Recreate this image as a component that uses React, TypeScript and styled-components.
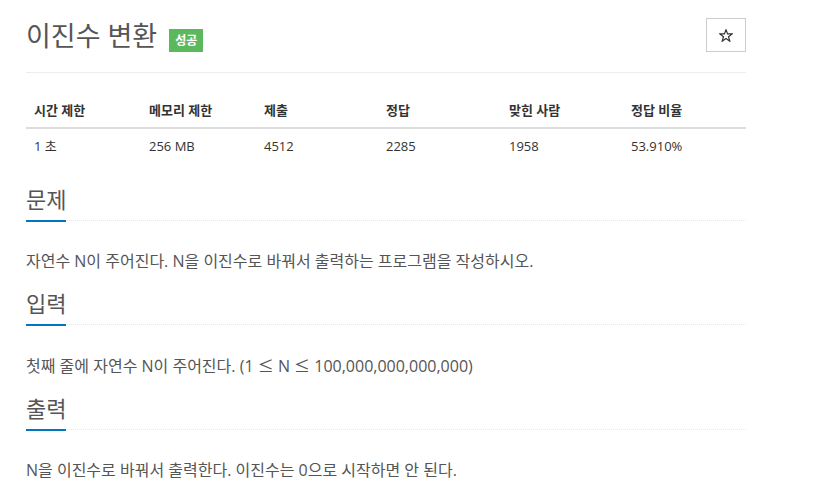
import type { ReactNode } from "react";
import { createGlobalStyle, styled } from "styled-components";

const GlobalStyle = createGlobalStyle`
  html, body {
    margin: 0;
    padding: 0;
    background: #fff;
  }
  body {
    font-family: "Open Sans", "Noto Sans CJK KR", sans-serif;
    color: #555;
  }
`;

const Page = styled.div`
  width: 720px;
  padding: 18px 0 0 26px;
`;

const Header = styled.div`
  display: flex;
  justify-content: space-between;
  align-items: flex-start;
  padding-bottom: 19px;
  border-bottom: 1px solid #eee;
`;

const TitleGroup = styled.div`
  display: flex;
  align-items: center;
  gap: 12px;
  padding-top: 1px;
`;

const Title = styled.h1`
  margin: 0;
  font-size: 27px;
  font-weight: 400;
  line-height: 34px;
  color: #555;
`;

const Badge = styled.span`
  display: inline-block;
  margin-top: 8px;
  height: 23px;
  padding: 0 6px;
  background: #5cb85c;
  color: #fff;
  font-size: 12px;
  font-weight: 700;
  line-height: 23px;
`;

const StarButton = styled.button`
  width: 40px;
  height: 34px;
  display: flex;
  align-items: center;
  justify-content: center;
  padding: 0;
  background: #fff;
  border: 1px solid #ccc;
  color: #333;
`;

const InfoTable = styled.table`
  width: 720px;
  margin-top: 20px;
  border-collapse: collapse;
  table-layout: fixed;
  font-size: 13px;
  color: #333;
`;

const Col = styled.col<{ $w: number }>`
  width: ${(p) => p.$w}px;
`;

const Th = styled.th`
  text-align: left;
  font-weight: 700;
  padding: 8px;
  line-height: 18px;
  border-bottom: 2px solid #ddd;
`;

const Td = styled.td`
  padding: 8px;
  line-height: 18px;
`;

const Section = styled.section`
  padding-top: 25px;

  & + & {
    padding-top: 0;
  }
`;

const Headline = styled.div`
  display: flex;
  border-bottom: 1px dotted #e4e9f0;
`;

const HeadlineTitle = styled.h2`
  margin: 0 0 -2px;
  padding-bottom: 10px;
  font-size: 22px;
  font-weight: 400;
  line-height: 22px;
  color: #555;
  border-bottom: 2px solid #0076c0;
`;

const Text = styled.p`
  margin: 29px 0 20px;
  font-size: 16px;
  line-height: 22px;
  color: #555;
`;

// the ≤ sign comes from the CJK font in the reference, wider than Open Sans'
const MathSign = styled.span`
  font-family: "Noto Sans CJK KR", sans-serif;
`;

const columns = [115, 115, 122, 123, 122, 123];
const heads = ["시간 제한", "메모리 제한", "제출", "정답", "맞힌 사람", "정답 비율"];
const values = ["1 초", "256 MB", "4512", "2285", "1958", "53.910%"];

const sections: { title: string; body: ReactNode }[] = [
  { title: "문제", body: "자연수 N이 주어진다. N을 이진수로 바꿔서 출력하는 프로그램을 작성하시오." },
  {
    title: "입력",
    body: (
      <>
        첫째 줄에 자연수 N이 주어진다. (1 <MathSign>≤</MathSign> N <MathSign>≤</MathSign>{" "}
        100,000,000,000,000)
      </>
    ),
  },
  { title: "출력", body: "N을 이진수로 바꿔서 출력한다. 이진수는 0으로 시작하면 안 된다." },
];

function StarIcon() {
  return (
    <svg width="14" height="13" viewBox="0 0 14 13">
      <polygon
        points="7,0.8 8.6,4.9 13.1,4.9 9.5,7.7 10.8,12.2 7,9.5 3.2,12.2 4.5,7.7 0.9,4.9 5.4,4.9"
        fill="none"
        stroke="currentColor"
        strokeWidth="1.2"
        strokeLinejoin="miter"
      />
    </svg>
  );
}

export default function App() {
  return (
    <>
      <GlobalStyle />
      <Page>
        <Header>
          <TitleGroup>
            <Title>이진수 변환</Title>
            <Badge>성공</Badge>
          </TitleGroup>
          <StarButton aria-label="즐겨찾기">
            <StarIcon />
          </StarButton>
        </Header>

        <InfoTable>
          <colgroup>
            {columns.map((w, i) => (
              <Col key={i} $w={w} />
            ))}
          </colgroup>
          <thead>
            <tr>
              {heads.map((h) => (
                <Th key={h}>{h}</Th>
              ))}
            </tr>
          </thead>
          <tbody>
            <tr>
              {values.map((v) => (
                <Td key={v}>{v}</Td>
              ))}
            </tr>
          </tbody>
        </InfoTable>

        {sections.map((s) => (
          <Section key={s.title}>
            <Headline>
              <HeadlineTitle>{s.title}</HeadlineTitle>
            </Headline>
            <Text>{s.body}</Text>
          </Section>
        ))}
      </Page>
    </>
  );
}
